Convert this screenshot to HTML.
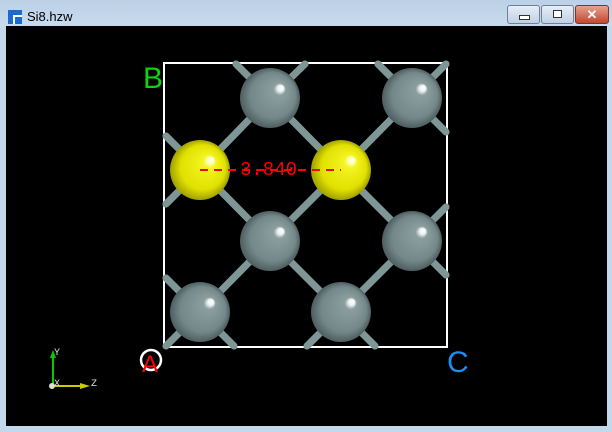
<!DOCTYPE html>
<html><head><style>
body{margin:0;width:612px;height:432px;overflow:hidden;background:#c4d8ec;font-family:"Liberation Sans",sans-serif;position:relative}
.tb{position:absolute;left:0;top:0;width:612px;height:26px;background:linear-gradient(#bcd0e6,#c8dbee)}
.vp{position:absolute;left:6px;top:26px;width:601px;height:400px;background:#000}
.btn{position:absolute;top:5px;height:17px;border:1px solid #6d7f99;border-radius:3px;background:linear-gradient(#e6eef8,#c0d0e4)}
</style></head><body>
<div class="tb"></div>
<svg style="position:absolute;left:8px;top:10px" width="14" height="14"><rect width="14" height="14" fill="#1a6ad0"/><rect x="5" y="5" width="9" height="9" fill="#fff"/><rect x="7" y="7" width="7" height="7" fill="#1a6ad0"/></svg>
<div style="position:absolute;left:27px;top:9px;font-size:13px;color:#000">Si8.hzw</div>
<div class="btn" style="left:507px;width:31px"><div style="position:absolute;left:11px;top:9px;width:9px;height:3px;border:1px solid #333;background:#fff"></div></div>
<div class="btn" style="left:541px;width:31px"><div style="position:absolute;left:11px;top:4px;width:7px;height:6px;border:1px solid #333;background:#fff"></div></div>
<div class="btn" style="left:575px;width:32px;background:linear-gradient(#e8a090,#c04830);border-color:#8a3020;color:#fff;font-weight:bold;font-size:13px;text-align:center;line-height:17px">✕</div>
<div class="vp"></div>
<svg style="position:absolute;left:0;top:0" width="612" height="432">
<defs><radialGradient id="g" cx="0.5" cy="0.5" r="0.5" fx="0.7" fy="0.32"><stop offset="0" stop-color="#fff"/><stop offset="0.1" stop-color="#eef4f4"/><stop offset="0.2" stop-color="#8a9e9e"/><stop offset="0.75" stop-color="#74888a"/><stop offset="1" stop-color="#4e5e60"/></radialGradient>
<radialGradient id="y" cx="0.5" cy="0.5" r="0.5" fx="0.7" fy="0.32"><stop offset="0" stop-color="#fff"/><stop offset="0.1" stop-color="#ffffc0"/><stop offset="0.22" stop-color="#f4f420"/><stop offset="0.75" stop-color="#e0e000"/><stop offset="1" stop-color="#a0a000"/></radialGradient></defs>
<rect x="164" y="63" width="283" height="284" fill="none" stroke="#fff" stroke-width="2"/>
<g id="b" stroke="#7e9696" stroke-width="7" stroke-linecap="round">
<line x1="200" y1="170" x2="270" y2="98"/><line x1="270" y1="98" x2="341" y2="170"/><line x1="341" y1="170" x2="412" y2="98"/>
<line x1="200" y1="170" x2="270" y2="241"/><line x1="341" y1="170" x2="270" y2="241"/><line x1="341" y1="170" x2="412" y2="241"/>
<line x1="270" y1="241" x2="200" y2="312"/><line x1="270" y1="241" x2="341" y2="312"/><line x1="412" y1="241" x2="341" y2="312"/>
<line x1="270" y1="98" x2="236" y2="64"/><line x1="270" y1="98" x2="305" y2="64"/><line x1="412" y1="98" x2="378" y2="64"/><line x1="412" y1="98" x2="446" y2="64"/><line x1="412" y1="98" x2="446" y2="132"/>
<line x1="200" y1="170" x2="166" y2="136"/><line x1="200" y1="170" x2="166" y2="204"/>
<line x1="412" y1="241" x2="446" y2="207"/><line x1="412" y1="241" x2="446" y2="275"/>
<line x1="200" y1="312" x2="166" y2="278"/><line x1="200" y1="312" x2="166" y2="346"/><line x1="200" y1="312" x2="234" y2="346"/>
<line x1="341" y1="312" x2="307" y2="346"/><line x1="341" y1="312" x2="375" y2="346"/>
</g>
<use href="#b" style="stroke:#9ab0b0;stroke-width:2"/>
<g>
<circle cx="270" cy="98" r="30" fill="url(#g)"/><circle cx="412" cy="98" r="30" fill="url(#g)"/>
<circle cx="200" cy="170" r="30" fill="url(#y)"/><circle cx="341" cy="170" r="30" fill="url(#y)"/>
<circle cx="270" cy="241" r="30" fill="url(#g)"/><circle cx="412" cy="241" r="30" fill="url(#g)"/>
<circle cx="200" cy="312" r="30" fill="url(#g)"/><circle cx="341" cy="312" r="30" fill="url(#g)"/>
</g>
<line x1="200" y1="170" x2="341" y2="170" stroke="#f00" stroke-width="2" stroke-dasharray="8,6"/>
<text x="240" y="175" fill="#f00" font-family="Liberation Mono" font-size="19">3.840</text>
<text x="143" y="88" fill="#10d010" font-size="30">B</text>
<text x="447" y="372" fill="#1a8ef0" font-size="30">C</text>
<circle cx="151" cy="360" r="10" fill="none" stroke="#fff" stroke-width="2.5"/>
<text x="142" y="372" fill="#f00" font-size="24">A</text>
<line x1="53" y1="386" x2="53" y2="356" stroke="#0c0" stroke-width="2"/><polygon points="50,358 56,358 53,350" fill="#0c0"/>
<line x1="53" y1="386" x2="82" y2="386" stroke="#cc0" stroke-width="2"/><polygon points="80,383 80,389 90,386" fill="#cc0"/>
<circle cx="52" cy="386" r="3" fill="#ddd"/>
<g fill="#ddd" font-family="Liberation Mono" font-size="10"><text x="54" y="355">Y</text><text x="54" y="386">X</text><text x="91" y="386">Z</text></g>
</svg>
</body></html>
